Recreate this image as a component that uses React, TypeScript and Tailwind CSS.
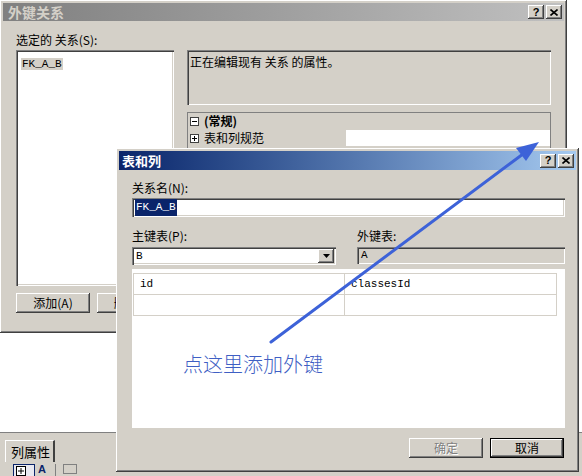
import React from 'react';

const raised =
  'shadow-[inset_-1px_-1px_0_#404040,inset_1px_1px_0_#ffffff,inset_-2px_-2px_0_#808080,inset_2px_2px_0_#d4d0c8]';
const sunken =
  'shadow-[inset_1px_1px_0_#808080,inset_2px_2px_0_#404040,inset_-1px_-1px_0_#ffffff,inset_-2px_-2px_0_#d4d0c8]';
const mono = "font-['Liberation_Mono',monospace] text-[11px]";

function CapButtons() {
  return (
    <div className="flex gap-[2px]">
      <div className={`w-[16px] h-[14px] bg-[#d4d0c8] ${raised} flex items-center justify-center`}>
        <span className="text-[11px] font-bold leading-none text-black font-['Liberation_Sans',sans-serif]">?</span>
      </div>
      <div className={`w-[16px] h-[14px] bg-[#d4d0c8] ${raised} flex items-center justify-center`}>
        <svg width="8" height="7" viewBox="0 0 8 7">
          <path d="M0.5 0.5 L7.5 6.5 M7.5 0.5 L0.5 6.5" stroke="#000" strokeWidth="1.6" />
        </svg>
      </div>
    </div>
  );
}

function Btn({ children, def, disabled, className = '' }: { children: React.ReactNode; def?: boolean; disabled?: boolean; className?: string }) {
  return (
    <div
      className={`h-[20px] w-[74px] bg-[#d4d0c8] flex items-center justify-center text-[12px] ${
        def ? 'border border-black' : ''
      } ${raised} ${className}`}
    >
      <span className={disabled ? 'text-[#808080] [text-shadow:1px_1px_0_#ffffff]' : 'text-black'}>{children}</span>
    </div>
  );
}

function BoxSign({ plus }: { plus?: boolean }) {
  return (
    <svg width="9" height="9" viewBox="0 0 9 9" className="shrink-0">
      <rect x="0.5" y="0.5" width="8" height="8" fill="#fff" stroke="#404040" />
      <path d="M2 4.5 H7" stroke="#000" />
      {plus && <path d="M4.5 2 V7" stroke="#000" />}
    </svg>
  );
}

const App = () => {
  return (
    <div className="relative w-[582px] h-[476px] overflow-hidden bg-white font-['SimSun','Noto_Sans_CJK_SC',sans-serif] text-[12px] text-black flex flex-col">
      {/* app background */}
      <div className="flex-1 bg-white" />
      <div className="h-[44px] bg-[#d4d0c8] border-t border-[#808080] flex flex-col">
        <div className="flex pl-[5px] pt-[7px]">
          <div className="h-[22px] w-[50px] border-l border-t border-white border-r-2 border-r-[#404040] flex items-center pl-[5px] text-[13px]">
            列属性
          </div>
        </div>
        <div className="flex items-start pl-[13px] pt-[2px] gap-[3px]">
          <div className="w-[22px] h-[14px] border border-[#0a246a] bg-[#e8e8f0] flex items-center pl-[2px]">
            <svg width="10" height="10" viewBox="0 0 10 10">
              <rect x="0.5" y="0.5" width="9" height="9" fill="#fff" stroke="#000" />
              <path d="M2 5 H8 M5 2 V8" stroke="#000" />
            </svg>
          </div>
          <span className="text-[11px] leading-[11px] font-bold text-[#0a246a] font-['Liberation_Sans',sans-serif]">A</span>
          <div className="w-px h-[12px] bg-[#808080] ml-[6px]" />
          <div className="w-[14px] h-[10px] border border-[#808080] ml-[4px]" />
        </div>
      </div>

      {/* outer dialog: 外键关系 */}
      <div className={`absolute left-0 top-0 w-[567px] h-[333px] bg-[#d4d0c8] p-[3px] ${raised}`}>
        <div className="h-[18px] bg-gradient-to-r from-[#808080] to-[#c0c0c0] flex items-center justify-between pl-[5px] pr-[2px]">
          <span className="text-[14px] font-bold text-[#d4d0c8]">外键关系</span>
          <CapButtons />
        </div>
        <div className="flex pl-[13px] pt-[12px]">
          <div className="w-[158px] flex flex-col">
            <div className="h-[17px] leading-[14px]">选定的 关系(S):</div>
            <div className={`h-[236px] bg-white ${sunken} px-[5px] py-[3px]`}>
              <span className={`bg-[#d4d0c8] px-[1px] ${mono}`}>FK_A_B</span>
            </div>
            <div className="flex gap-[7px] mt-[7px]">
              <Btn>添加(A)</Btn>
              <Btn>删除(D)</Btn>
            </div>
          </div>
          <div className="ml-[13px] w-[364px] pt-[17px] flex flex-col">
            <div className={`h-[55px] ${sunken} bg-[#d4d0c8] px-[3px] py-[3px]`}>正在编辑现有 关系 的属性。</div>
            <div className="mt-[7px] h-[174px] border border-[#808080] bg-[#d4d0c8] flex flex-col">
              <div className="h-[16px] flex items-center gap-[5px] pl-[2px]">
                <BoxSign />
                <span className="font-bold">(常规)</span>
              </div>
              <div className="h-[16px] flex items-center mt-[1px]">
                <div className="w-[158px] flex items-center gap-[5px] pl-[2px]">
                  <BoxSign plus />
                  <span>表和列规范</span>
                </div>
                <div className="flex-1 h-full bg-white" />
              </div>
            </div>
          </div>
        </div>
      </div>

      {/* inner dialog: 表和列 */}
      <div className={`absolute left-[116px] top-[148px] w-[463px] h-[324px] bg-[#d4d0c8] p-[3px] ${raised}`}>
        <div className="h-[19px] bg-gradient-to-r from-[#0a246a] to-[#a6caf0] flex items-center justify-between pl-[3px] pr-[2px]">
          <span className="text-[13px] font-bold text-white">表和列</span>
          <CapButtons />
        </div>
        <div className="pl-[13px] pr-[11px] pt-[10px] flex flex-col">
          <div className="h-[16px] leading-[16px] mb-[2px]">关系名(N):</div>
          <div className={`h-[19px] bg-white ${sunken} flex items-center pl-[3px]`}>
            <span className={`bg-[#0a246a] text-white px-[1px] ${mono}`}>FK_A_B</span>
          </div>
          <div className="flex gap-[21px] mt-[11px]">
            <div className="w-[204px] flex flex-col">
              <div className="h-[16px] leading-[16px] mb-[3px]">主键表(P):</div>
              <div className={`h-[18px] bg-white ${sunken} flex items-center justify-between pl-[4px] pr-[2px]`}>
                <span className={mono}>B</span>
                <div className={`w-[16px] h-[14px] bg-[#d4d0c8] ${raised} flex items-center justify-center`}>
                  <svg width="7" height="4" viewBox="0 0 7 4">
                    <path d="M0 0 H7 L3.5 4 Z" fill="#000" />
                  </svg>
                </div>
              </div>
            </div>
            <div className="flex-1 flex flex-col">
              <div className="h-[16px] leading-[16px] mb-[3px]">外键表:</div>
              <div className={`h-[17px] bg-[#d4d0c8] ${sunken} flex items-center pl-[4px]`}>
                <span className={mono}>A</span>
              </div>
            </div>
          </div>
          <div className="mt-[4px] h-[159px] bg-white pl-[1px] pt-[4px]">
            <div className="w-[424px] border border-[#d4d0c8]">
              <div className="h-[21px] flex border-b border-[#d4d0c8]">
                <div className={`w-[211px] border-r border-[#d4d0c8] flex items-center pl-[6px] ${mono}`}>id</div>
                <div className={`flex-1 flex items-center pl-[6px] ${mono}`}>classesId</div>
              </div>
              <div className="h-[20px] flex">
                <div className="w-[211px] border-r border-[#d4d0c8]" />
                <div className="flex-1" />
              </div>
            </div>
          </div>
          <div className="flex justify-end gap-[7px] mt-[10px] pr-[1px]">
            <Btn disabled>确定</Btn>
            <Btn def>取消</Btn>
          </div>
        </div>
      </div>

      {/* annotation */}
      <svg className="absolute left-0 top-0 pointer-events-none" width="582" height="476" viewBox="0 0 582 476">
        <line x1="271" y1="342" x2="523" y2="154" stroke="#3d62d8" strokeWidth="3" strokeLinecap="round" />
        <polygon points="539,142 526,161 516,148" fill="#3d62d8" />
      </svg>
      <div className="absolute left-[183px] top-[352px] text-[20px] leading-[24px] text-[#3f5fc4] font-['Noto_Sans_CJK_SC',sans-serif] font-light">
        点这里添加外键
      </div>
    </div>
  );
};

export default App;
